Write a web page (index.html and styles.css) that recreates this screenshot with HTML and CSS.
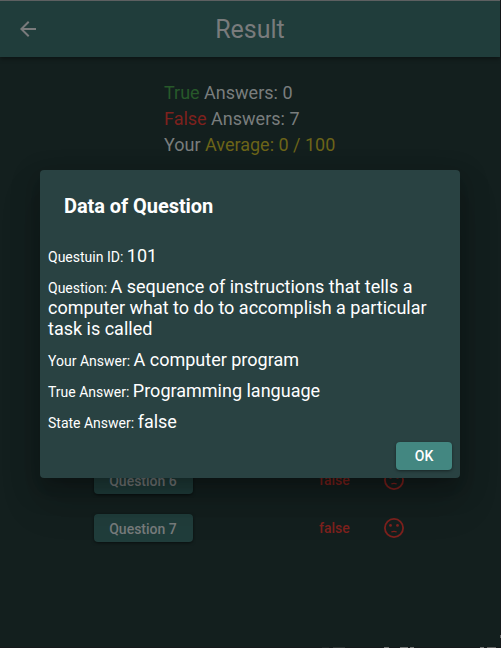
FILE: index.html
```
<!DOCTYPE html>
<html lang="en">
<head>
<meta charset="utf-8">
<title>Result</title>
<link rel="stylesheet" href="styles.css">
</head>
<body>
<div class="app">
  <header class="bar">
    <svg class="back" viewBox="0 0 24 24"><path d="M20 11H7.83l5.59-5.59L12 4l-8 8 8 8 1.41-1.41L7.83 13H20v-2z"/></svg>
    <h1 class="title">Result</h1>
  </header>
  <main class="content">
    <div class="summary">
      <div><span class="good">True</span> Answers: 0</div>
      <div><span class="bad">False</span> Answers: 7</div>
      <div>Your <span class="average">Average: 0 / 100</span></div>
    </div>
    <div class="results">
      <div class="row">
        <button class="question">Question 6</button>
        <span class="state">false</span>
        <svg class="face" viewBox="0 0 22 22"><circle class="ring" cx="11" cy="11" r="9.1"/><circle cx="7.5" cy="8.4" r="1.4"/><circle cx="14.5" cy="8.4" r="1.4"/><path class="mouth" d="M8.3 15q2.7-1.3 5.4 0"/></svg>
      </div>
      <div class="row">
        <button class="question">Question 7</button>
        <span class="state">false</span>
        <svg class="face" viewBox="0 0 22 22"><circle class="ring" cx="11" cy="11" r="9.1"/><circle cx="7.5" cy="8.4" r="1.4"/><circle cx="14.5" cy="8.4" r="1.4"/><path class="mouth" d="M8.3 15q2.7-1.3 5.4 0"/></svg>
      </div>
    </div>
  </main>
</div>
<div class="overlay">
  <section class="dialog">
    <h2 class="heading">Data of Question</h2>
    <div class="details">
      <p>Questuin ID: <span class="value">101</span></p>
      <p>Question: <span class="value">A sequence of instructions that tells a computer what to do to accomplish a particular task is called</span></p>
      <p>Your Answer: <span class="value">A computer program</span></p>
      <p>True Answer: <span class="value">Programming language</span></p>
      <p>State Answer: <span class="value">false</span></p>
    </div>
    <div class="actions"><button class="ok">OK</button></div>
  </section>
</div>
</body>
</html>
```
FILE: styles.css
```
* { box-sizing: border-box; }
body {
  margin: 0;
  height: 648px;
  overflow: hidden;
  font-family: Roboto, sans-serif;
  background:
    linear-gradient(90deg, transparent 322px, #222627 322px 329px, transparent 329px 333px, #303435 333px 345px, transparent 345px 384px, #777 384px 389px, transparent 389px 400px, #777 400px 408px, transparent 408px 410px, #777 410px 414px, transparent 414px 480px, #777 480px 484px, transparent 484px 487px, #666 487px 496px, transparent 496px) 0 647px / 100% 1px no-repeat,
    linear-gradient(#666, #666) 500px 635px / 1px 3px no-repeat,
    #15191b;
}
h1, h2, p { margin: 0; }
button { border: 0; padding: 0; font-family: inherit; }
.app { width: 500px; height: 647px; background: #131f1e; border-top: 1px solid #616465; }
.bar { height: 56px; display: flex; align-items: center; padding-left: 16px; background: #203d3b; box-shadow: 0 2px 4px rgba(0,0,0,.35); }
.back { width: 24px; height: 24px; fill: #797b7c; }
.title { flex: 1; padding: 2px 40px 0 0; text-align: center; font-size: 25px; font-weight: 400; line-height: 30px; color: #797b7c; }
.content { padding-top: 23px; }
.summary { margin-left: 164px; font-size: 18px; line-height: 26px; color: #797d7d; }
.good { color: #27592a; }
.bad { color: #7e211d; }
.average { color: #6c6418; }
.results { margin-top: 308px; padding-left: 93.5px; display: grid; gap: 20px; }
.row { display: flex; align-items: center; height: 28px; }
.question { width: 99px; height: 28px; padding-top: 2px; border-radius: 4px; background: #203d3b; color: #777b7b; font-size: 14px; font-weight: 500; box-shadow: 0 1px 3px rgba(0,0,0,.5); }
.state { width: 65px; margin-left: 126.5px; color: #7e211d; font-size: 14px; font-weight: 500; }
.face { width: 22px; height: 22px; margin-left: -1px; fill: #7e211d; }
.ring { fill: none; stroke: #7e211d; stroke-width: 1.8; }
.mouth { fill: none; stroke: #7e211d; stroke-width: 1.3; }
.overlay { position: absolute; inset: 0 1px 0 0; display: flex; align-items: center; justify-content: center; }
.dialog { width: 420px; height: 308px; border-radius: 4px; background: #294242; color: #fff; box-shadow: 0 11px 15px -7px rgba(0,0,0,.2), 0 24px 38px 3px rgba(0,0,0,.14), 0 9px 24px 8px rgba(0,0,0,.12); }
.heading { padding: 24px 24px 20px; font-size: 20px; line-height: 24px; font-weight: 700; letter-spacing: -.06px; }
.details { padding: 9px 8px 0; display: grid; gap: 10px; }
.details p { font-size: 14px; line-height: 21px; }
.value { font-size: 18px; line-height: 0; }
.actions { display: flex; justify-content: flex-end; padding: 8px 8px 0; }
.ok { width: 56px; height: 28px; border-radius: 4px; background: #438781; color: #fff; font-size: 14px; font-weight: 500; box-shadow: 0 1px 3px rgba(0,0,0,.45); }
```
